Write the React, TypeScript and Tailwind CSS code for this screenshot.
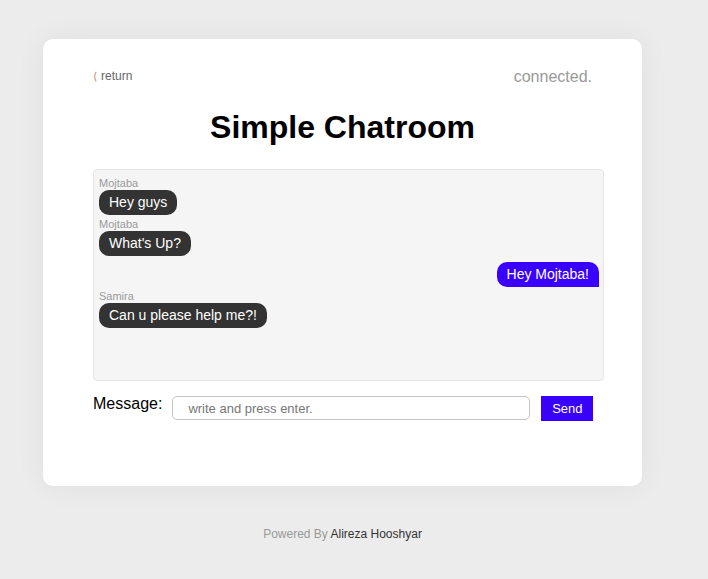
import { useState } from 'react'

type Msg = { author: string; text: string; mine?: boolean }

const messages: Msg[] = [
  { author: 'Mojtaba', text: 'Hey guys' },
  { author: 'Mojtaba', text: "What's Up?" },
  { author: 'Me', text: 'Hey Mojtaba!', mine: true },
  { author: 'Samira', text: 'Can u please help me?!' },
]

export default function App() {
  const [draft, setDraft] = useState('')

  return (
    <div className="min-h-[579px] bg-[#ececec] font-['Liberation_Sans',Arial,sans-serif] pt-[39px]">
      <div className="ml-[43px] w-[599px]">
        <div className="h-[447px] rounded-[10px] bg-white shadow-[0_0_30px_rgba(0,0,0,0.06)] pl-[50px] pr-[38px] pt-[28px]">
          <div className="flex items-start justify-between pr-[12px]">
            <a className="mt-[2px] flex items-center gap-[4px] text-[12px] leading-[14px] text-[#666]" href="#">
              <span className="text-[#b08a68] text-[11px]">⟨</span>
              <span>return</span>
            </a>
            <span className="mt-[1px] text-[16px] leading-[18px] text-[#999]">connected.</span>
          </div>

          <h1 className="mt-[23px] pr-[12px] text-center text-[32px] leading-[37px] font-bold text-black">
            Simple Chatroom
          </h1>

          <div className="mt-[23px] h-[212px] rounded-[4px] border border-[#e6e6e6] bg-[#f5f5f5] pl-[5px] pr-[4px] pt-[7px]">
            {messages.map((m, i) => (
              <div key={i} className={m.mine ? 'mt-[6px] flex flex-col items-end' : 'mt-[3px] flex flex-col items-start first:mt-0'}>
                {!m.mine && <div className="text-[11px] leading-[13px] text-[#999]">{m.author}</div>}
                <div
                  className={
                    m.mine
                      ? 'rounded-[10px] rounded-br-none bg-[#3a00ff] px-[10px] text-[14px] leading-[25px] text-white'
                      : 'rounded-[10px] bg-[#333] px-[10px] text-[14px] leading-[25px] text-white'
                  }
                >
                  {m.text}
                </div>
              </div>
            ))}
          </div>

          <div className="mt-[14px] flex items-start">
            <label className="shrink-0 text-[16px] leading-[18px] text-black">Message:</label>
            <input
              value={draft}
              onChange={(e) => setDraft(e.target.value)}
              placeholder="write and press enter."
              className="ml-[10px] mt-[1px] h-[24px] w-[358px] shrink-0 rounded-[5px] border border-[#c4c4c4] bg-white px-[15px] text-[13px] text-[#333] outline-none placeholder:text-[#777]"
            />
            <button className="ml-[11px] mt-[1px] h-[25px] w-[52px] shrink-0 bg-[#3a00ff] text-[13px] text-white">Send</button>
          </div>
        </div>

        <div className="mt-[41px] pb-[39px] text-center text-[12px] leading-[14px]">
          <span className="text-[#999]">Powered By </span>
          <span className="text-[#333]">Alireza Hooshyar</span>
        </div>
      </div>
    </div>
  )
}
